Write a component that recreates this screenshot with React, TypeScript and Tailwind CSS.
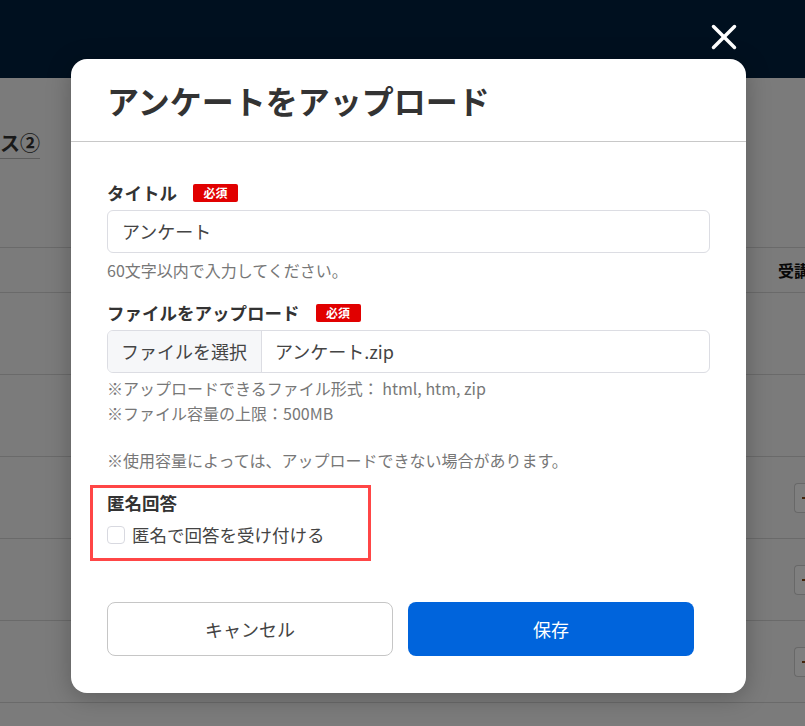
import { X } from 'lucide-react'

const font = "font-['Noto_Sans_CJK_JP','Noto_Sans',sans-serif]"

function Required() {
  return (
    <span className="inline-flex h-[18px] w-[45px] items-center justify-center rounded-[2px] bg-[#e10000] text-[12px] font-bold leading-none text-white">
      必須
    </span>
  )
}

/** Dimmed page behind the dialog. */
function BackgroundPage() {
  const rows = [0, 1, 2, 3, 4, 5]
  return (
    <div className="flex h-[726px] flex-col bg-[#f6f6f6]">
      <div className="h-[78px] shrink-0 bg-[#00203f]" />
      <div className="flex h-[169px] shrink-0 flex-col pt-[53px]">
        <div className="w-[40px] whitespace-nowrap border-b border-[#b8b8b8] pb-[3px] text-[20px] font-bold leading-[24px] text-[#333]">
          ス②
        </div>
      </div>
      <div className="flex h-[46px] shrink-0 items-center border-y border-[#d4d4d4] pl-[778px]">
        <span className="whitespace-nowrap text-[16px] font-bold text-[#111]">受講</span>
      </div>
      {rows.map((r) => (
        <div key={r} className="flex h-[82px] shrink-0 items-center justify-end border-b border-[#d4d4d4]">
          {r >= 2 && r <= 4 && (
            <div className="flex h-[30px] w-[11px] items-center justify-end rounded-l-[4px] border border-r-0 border-[#d0d0d0] bg-white">
              <span className="h-[2px] w-[3px] bg-[#8a4a1a]" />
            </div>
          )}
        </div>
      ))}
    </div>
  )
}

export default function App() {
  return (
    <div className={`relative h-[726px] w-full overflow-hidden ${font}`}>
      <BackgroundPage />

      {/* Overlay */}
      <div className="absolute inset-0 bg-black/50">
        <button className="absolute left-[703px] top-[16px] text-white" aria-label="閉じる">
          <X size={42} strokeWidth={2} />
        </button>

        <div className="absolute left-[71px] top-[59px] w-[675px] rounded-[16px] bg-white shadow-[0_4px_24px_rgba(0,0,0,0.25)]">
          <div className="border-b border-[#c8c8c8] px-[36px] py-[17px]">
            <h2 className="text-[32px] font-bold leading-[48px] text-[#333]">アンケートをアップロード</h2>
          </div>

          <div className="flex flex-col px-[36px] pb-[37px] pt-[38px]">
            <div className="flex items-center gap-[16px]">
              <label className="text-[17.5px] font-bold leading-[26px] text-[#333]">タイトル</label>
              <Required />
            </div>
            <div className="mt-[4px] flex h-[43px] items-center rounded-[6px] border border-[#dcdde3] px-[14px] text-[18px] text-[#444]">
              アンケート
            </div>
            <p className="mt-[6px] text-[16px] leading-[22px] text-[#777]">60文字以内で入力してください。</p>

            <div className="mt-[19px] flex items-center gap-[16px]">
              <label className="text-[17.5px] font-bold leading-[26px] text-[#333]">ファイルをアップロード</label>
              <Required />
            </div>
            <div className="mt-[4px] flex h-[43px] overflow-hidden rounded-[6px] border border-[#dcdde3] text-[18px] text-[#444]">
              <div className="flex w-[154px] items-center border-r border-[#dcdde3] bg-[#f6f7f9] px-[13px]">ファイルを選択</div>
              <div className="flex items-center px-[13px]">アンケート.zip</div>
            </div>
            <div className="mt-[3px] text-[16px] leading-[25px] text-[#777]">
              <p>※アップロードできるファイル形式： html, htm, zip</p>
              <p>※ファイル容量の上限：500MB</p>
              <p className="mt-[22px]">※使用容量によっては、アップロードできない場合があります。</p>
            </div>

            <div className="-ml-[17px] mt-[12px] w-[281px] border-[3px] border-[#ff4646] pb-[10px] pl-[14px] pt-[2px]">
              <p className="text-[17.5px] font-bold leading-[26px] text-[#333]">匿名回答</p>
              <label className="mt-[6px] flex items-center gap-[7px] text-[17.5px] leading-[26px] text-[#444]">
                <span className="h-[18px] w-[18px] rounded-[4px] border border-[#d8d9e0] bg-white" />
                匿名で回答を受け付ける
              </label>
            </div>

            <div className="mt-[41px] flex gap-[15px]">
              <button className="h-[54px] w-[286px] rounded-[8px] border border-[#c6c6c6] bg-white text-[18px] text-[#444]">
                キャンセル
              </button>
              <button className="h-[54px] w-[286px] rounded-[8px] bg-[#0064dc] text-[18px] text-white">保存</button>
            </div>
          </div>
        </div>
      </div>
    </div>
  )
}
